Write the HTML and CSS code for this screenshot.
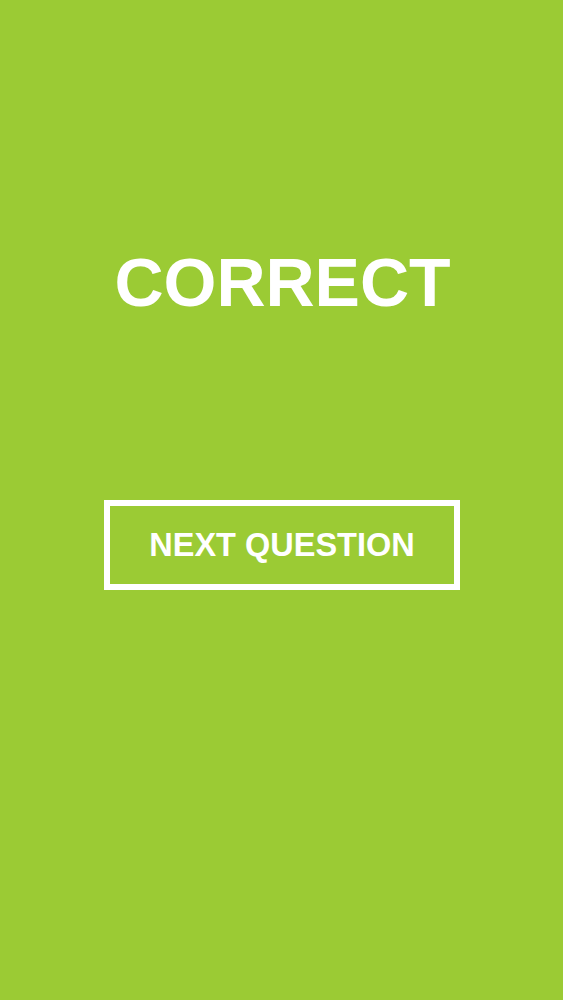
FILE: index.html
```html
<!DOCTYPE html>
<html>
<head>
<meta charset="utf-8">
<link rel="stylesheet" href="styles.css">
</head>
<body>
<main class="screen">
  <h1 class="result">CORRECT</h1>
  <button class="next">NEXT QUESTION</button>
</main>
</body>
</html>
```
FILE: styles.css
```css
html, body {
  margin: 0;
  padding: 0;
  background: #9bcb34;
}
.screen {
  height: 1000px;
  display: flex;
  flex-direction: column;
  align-items: center;
  font-family: "Liberation Sans", Arial, sans-serif;
  color: #fff;
}
.result {
  margin: 243px 0 0 0;
  padding-left: 2px;
  font-size: 68px;
  line-height: 78px;
  font-weight: bold;
  letter-spacing: 0;
}
.next {
  margin-top: 179px;
  width: 356px;
  height: 90px;
  box-sizing: border-box;
  border: 6px solid #fff;
  background: transparent;
  color: #fff;
  font-family: "Liberation Sans", Arial, sans-serif;
  font-weight: bold;
  font-size: 32.5px;
  padding: 0;
  margin-left: 1px;
}
```
